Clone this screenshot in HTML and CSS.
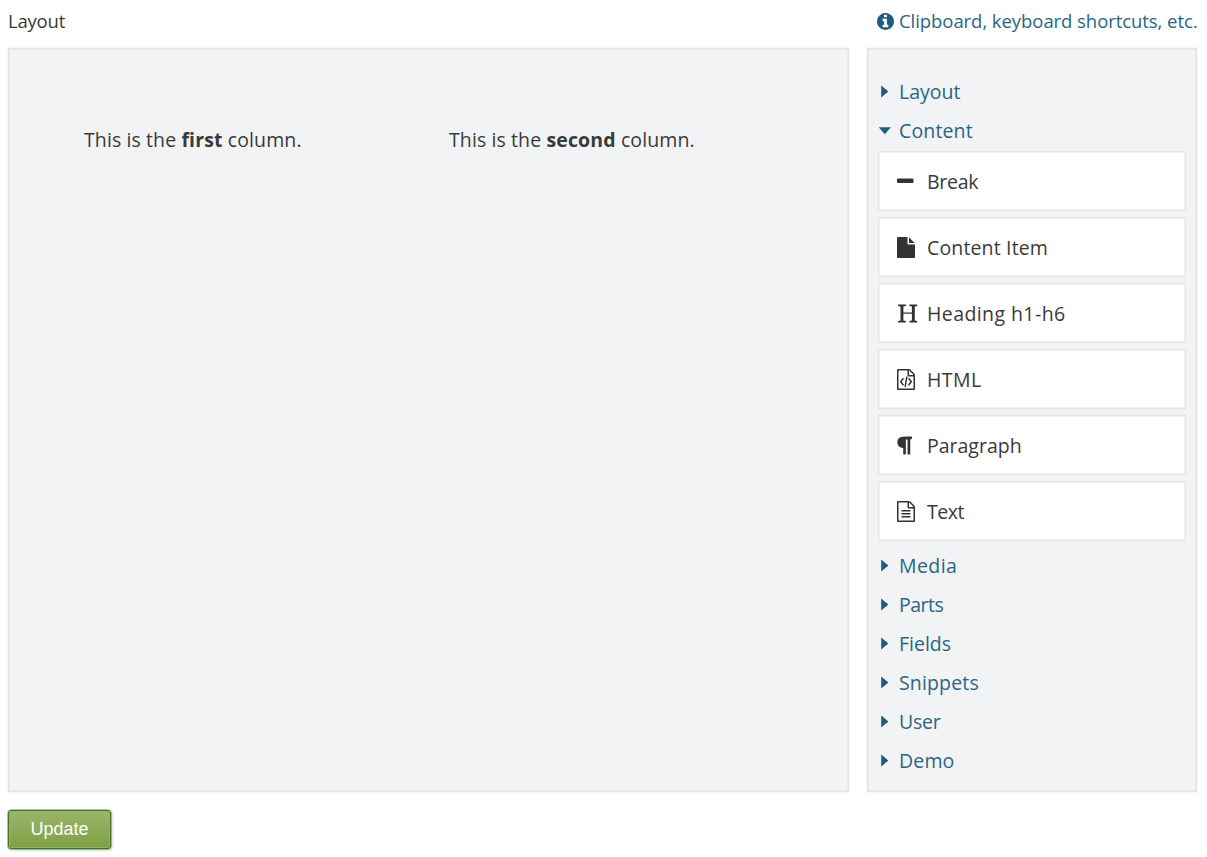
FILE: index.html
```html
<!DOCTYPE html>
<html lang="en">
<head>
<meta charset="utf-8">
<title>Layout</title>
<link rel="stylesheet" href="styles.css">
</head>
<body>
<main class="editor">
  <header class="topbar">
    <label class="t-label">Layout</label>
    <a class="help"><svg class="info" viewBox="128 128 1536 1536"><path d="M1152 1376v-160q0-14-9-23t-23-9h-96v-512q0-14-9-23t-23-9h-320q-14 0-23 9t-9 23v160q0 14 9 23t23 9h96v320h-96q-14 0-23 9t-9 23v160q0 14 9 23t23 9h448q14 0 23-9t9-23zm-128-896v-160q0-14-9-23t-23-9h-192q-14 0-23 9t-9 23v160q0 14 9 23t23 9h192q14 0 23-9t9-23zm640 416q0 209-103 385.5t-279.5 279.5-385.5 103-385.5-103-279.5-279.5-103-385.5 103-385.5 279.5-279.5 385.5-103 385.5 103 279.5 279.5 103 385.5z"/></svg><span>Clipboard, keyboard shortcuts, etc.</span></a>
  </header>
  <div class="panels">
    <section class="canvas">
      <p class="column">This is the <b>first</b> column.</p>
      <p class="column">This is the <b>second</b> column.</p>
    </section>
    <aside class="toolbox">
      <a class="group"><svg class="caret" viewBox="0 0 13 13"><path d="M3.2.4v12.2L10.4 6.5z"/></svg><span>Layout</span></a>
      <a class="group"><svg class="caret" viewBox="0 0 13 13"><path d="M.7 3.2h12.2L6.8 10.2z"/></svg><span class="wide">Content</span></a>
      <ul class="items">
        <li class="item"><svg class="icon" viewBox="192 0 1792 1792"><path d="M1600 736v192q0 40-28 68t-68 28h-1216q-40 0-68-28t-28-68v-192q0-40 28-68t68-28h1216q40 0 68 28t28 68z"/></svg><span class="tight">Break</span></li>
        <li class="item"><svg class="icon" viewBox="128 0 1792 1792"><path d="M1152 512v-472q22 14 36 28l408 408q14 14 28 36h-472zm-128 32q0 40 28 68t68 28h544v1056q0 40-28 68t-68 28h-1344q-40 0-68-28t-28-68v-1600q0-40 28-68t68-28h800v544z"/></svg><span class="wide">Content Item</span></li>
        <li class="item"><svg class="icon" viewBox="0 0 21 21"><path d="M1 1.6h7.9v1.3L6.4 3.500v5.900h8.500V3.500l-2.500-.6V1.600h7.800v1.300l-2.400.6v14l2.400.6v1.300h-7.800v-1.300l2.500-.6v-6.700H6.400v6.700l2.500.6v1.300H1v-1.300l2.500-.6v-14L1 2.900z"/></svg><span class="wider">Heading h1-h6</span></li>
        <li class="item"><svg class="icon" viewBox="128 0 1792 1792"><path d="M1596 380q28 28 48 76t20 88v1152q0 40-28 68t-68 28h-1344q-40 0-68-28t-28-68v-1600q0-40 28-68t68-28h896q40 0 88 20t76 48zm-444-244v376h376q-10-29-22-41l-313-313q-12-12-41-22zm384 1528v-1024h-416q-40 0-68-28t-28-68v-416h-768v1536h1280zm-928-896q8-11 21-12.5t24 6.5l51 38q11 8 12.5 21t-6.5 24l-182 243 182 243q8 11 6.5 24t-12.5 21l-51 38q-11 8-24 6.5t-21-12.5l-226-301q-14-19 0-38zm802 301q14 19 0 38l-226 301q-8 11-21 12.5t-24-6.5l-51-38q-11-8-12.5-21t6.5-24l182-243-182-243q-8-11-6.5-24t12.5-21l51-38q11-8 24-6.5t21 12.5zm-620 461q-13-2-20.5-13t-5.5-24l138-831q2-13 13-20.5t24-5.5l63 10q13 2 20.5 13t5.5 24l-138 831q-2 13-13 20.5t-24 5.5z"/></svg><span class="wider">HTML</span></li>
        <li class="item"><svg class="icon" viewBox="254 0 1792 1792"><path d="M1534 189v73q0 29-18.500 61t-42.500 32q-50 0-54 1-26 6-32 31-3 11-3 64v1152q0 25-18 43t-43 18h-108q-25 0-43-18t-18-43v-1218h-143v1218q0 25-17.500 43t-43.500 18h-108q-26 0-43.500-18t-17.500-43v-496q-147-12-245-59-126-58-192-179-64-117-64-259 0-166 88-286 88-118 209-159 111-37 417-37h479q25 0 43 18t18 43z"/></svg><span>Paragraph</span></li>
        <li class="item"><svg class="icon" viewBox="128 0 1792 1792"><path d="M1596 380q28 28 48 76t20 88v1152q0 40-28 68t-68 28h-1344q-40 0-68-28t-28-68v-1600q0-40 28-68t68-28h896q40 0 88 20t76 48zm-444-244v376h376q-10-29-22-41l-313-313q-12-12-41-22zm384 1528v-1024h-416q-40 0-68-28t-28-68v-416h-768v1536h1280zM512 800q0-14 9-23t23-9h704q14 0 23 9t9 23v64q0 14-9 23t-23 9h-704q-14 0-23-9t-9-23zM1248 1024q14 0 23 9t9 23v64q0 14-9 23t-23 9h-704q-14 0-23-9t-9-23v-64q0-14 9-23t23-9zM1248 1280q14 0 23 9t9 23v64q0 14-9 23t-23 9h-704q-14 0-23-9t-9-23v-64q0-14 9-23t23-9z"/></svg><span class="tighter">Text</span></li>
      </ul>
      <a class="group"><svg class="caret" viewBox="0 0 13 13"><path d="M3.2.4v12.2L10.4 6.5z"/></svg><span class="wider">Media</span></a>
      <a class="group"><svg class="caret" viewBox="0 0 13 13"><path d="M3.2.4v12.2L10.4 6.5z"/></svg><span class="tighter">Parts</span></a>
      <a class="group"><svg class="caret" viewBox="0 0 13 13"><path d="M3.2.4v12.2L10.4 6.5z"/></svg><span>Fields</span></a>
      <a class="group"><svg class="caret" viewBox="0 0 13 13"><path d="M3.2.4v12.2L10.4 6.5z"/></svg><span class="wide">Snippets</span></a>
      <a class="group"><svg class="caret" viewBox="0 0 13 13"><path d="M3.2.4v12.2L10.4 6.5z"/></svg><span class="tight">User</span></a>
      <a class="group"><svg class="caret" viewBox="0 0 13 13"><path d="M3.2.4v12.2L10.4 6.5z"/></svg><span class="wide">Demo</span></a>
    </aside>
  </div>
  <button class="update">Update</button>
</main>
</body>
</html>
```
FILE: styles.css
```css
* { box-sizing: border-box; }
body {
  margin: 0;
  height: 857px;
  overflow: hidden;
  background: #fff;
  color: #3a3a3a;
  font: 19.5px/26px "Open Sans", "Noto Sans", sans-serif;
}
svg { display: block; flex: none; fill: currentColor; }
p, ul { margin: 0; padding: 0; }
span, label { white-space: nowrap; }
.editor { padding: 8px 10px 0 8px; }
.topbar { display: flex; justify-content: space-between; height: 40px; }
.t-label { font-size: 18.5px; letter-spacing: -0.2px; }
.help { display: flex; height: 26px; align-items: center; gap: 5px; color: #296684; font-size: 18.5px; letter-spacing: -0.06px; width: 320px; }
.info { width: 17px; height: 17px; color: #1e5d7d; }
.panels { display: grid; grid-template-columns: 841px 330px; gap: 18px; height: 744px; }
.canvas, .toolbox {
  background: #f2f3f5;
  border: 1px solid #e2e5e5;
  box-shadow: 0 0 0 0.5px #eef0f0, inset 0 0 0 1px #eaecec;
}
.canvas { display: grid; grid-template-columns: 365px 365px; padding: 78px 0 0 75px; }
.column { letter-spacing: 0.1px; }
.column b { letter-spacing: 0.15px; }
.toolbox { padding: 23px 10px 0; }
.group { display: flex; align-items: center; height: 39px; gap: 8px; color: #296684; }
.caret { width: 13px; height: 13px; color: #1e5d7d; }
.items { list-style: none; display: grid; gap: 6px; padding: 1px 0 5px; }
.item {
  display: flex;
  align-items: center;
  height: 60px;
  gap: 9px;
  padding-left: 18px;
  background: #fff;
  border: 1px solid #e2e5e5;
  box-shadow: inset 0 0 0 1px #f2f4f4;
}
.item span { padding-top: 2px; }
.icon { width: 21px; height: 21px; color: #333; }
.tight { letter-spacing: -0.25px; }
.tighter { letter-spacing: -0.5px; }
.wide { letter-spacing: 0.15px; }
.wider { letter-spacing: 0.42px; }
.update {
  display: block;
  width: 103px;
  height: 39px;
  margin-top: 18px;
  padding: 0;
  border: 1px solid #3f7424;
  border-radius: 3px;
  color: #fff;
  background: linear-gradient(#9ab66c, #7e9f42);
  box-shadow: 0 0 0 0.5px #6d9655, inset 0 0 0 1px #94b370, 1px 1px 3px #bbb;
  font: 18px "Liberation Sans", Arial, sans-serif;
}
```
